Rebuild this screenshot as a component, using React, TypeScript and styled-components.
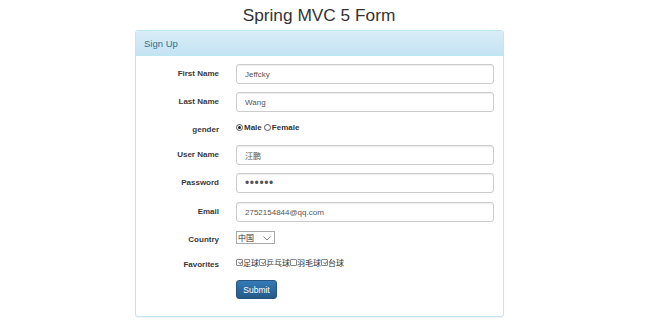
import { createGlobalStyle } from "styled-components";
import styled from "styled-components";

const GlobalStyle = createGlobalStyle`
  html, body {
    margin: 0;
    padding: 0;
    background: #ffffff;
  }
  body {
    font-family: "Liberation Sans", Arial, "Noto Sans CJK SC", sans-serif;
    color: #333333;
  }
`;

const Page = styled.div`
  width: 650px;
  height: 323px;
  overflow: hidden;
`;

const Title = styled.h2`
  margin: 0;
  padding-right: 12px;
  height: 30px;
  line-height: 30px;
  font-size: 17.3px;
  font-weight: 500;
  text-align: center;
  color: #333333;
`;

const Panel = styled.div`
  width: 367px;
  margin-left: 135px;
  border: 1px solid #bce8f1;
  border-radius: 3px;
  background: #ffffff;
  box-shadow: 0 1px 1px rgba(0, 0, 0, 0.05);
`;

const PanelHeading = styled.div`
  height: 24px;
  padding-left: 8px;
  display: flex;
  align-items: center;
  font-size: 9.5px;
  color: #31708f;
  background: linear-gradient(to bottom, #d9edf7 0%, #c4e3f3 100%);
  border-bottom: 1px solid #bce8f1;
  border-radius: 2px 2px 0 0;
`;

const PanelBody = styled.div`
  padding: 8px 0 17px 0;
`;

const Row = styled.div<{ $top?: number; $height: number }>`
  display: grid;
  grid-template-columns: 83px 258px;
  column-gap: 17px;
  margin-top: ${(p) => p.$top ?? 0}px;
  height: ${(p) => p.$height}px;
`;

const Label = styled.label<{ $pad?: number }>`
  font-size: 8px;
  font-weight: bold;
  color: #3a3a3a;
  text-align: right;
  padding-top: ${(p) => p.$pad ?? 0}px;
  line-height: ${(p) => (p.$pad === undefined ? "20px" : "10px")};
`;

const TextInput = styled.input<{ $dots?: boolean }>`
  display: block;
  box-sizing: border-box;
  width: 258px;
  height: 20px;
  padding: 0 8px;
  border: 1px solid #cccccc;
  border-radius: 3px;
  box-shadow: inset 0 1px 1px rgba(0, 0, 0, 0.075);
  font-family: "Liberation Sans", Arial, "Noto Sans CJK SC", sans-serif;
  font-size: ${(p) => (p.$dots ? "12px" : "8px")};
  letter-spacing: ${(p) => (p.$dots ? "0.6px" : "normal")};
  color: #555555;
  outline: none;
  background: #ffffff;
`;

const Inline = styled.div`
  display: flex;
  align-items: center;
  height: 12px;
  font-size: 8px;
  color: #333333;
`;

const RadioText = styled.span`
  font-weight: bold;
  margin-right: 2px;
`;

const Radio = styled.input`
  appearance: none;
  box-sizing: border-box;
  width: 7px;
  height: 7px;
  margin: 0 1px 0 0;
  border: 1px solid #555555;
  border-radius: 50%;
  background: #ffffff;
  position: relative;

  &:checked::after {
    content: "";
    position: absolute;
    left: 1px;
    top: 1px;
    width: 3px;
    height: 3px;
    border-radius: 50%;
    background: #222222;
  }
`;

const Check = styled.input`
  appearance: none;
  box-sizing: border-box;
  width: 7px;
  height: 7px;
  margin: 0;
  border: 1px solid #888888;
  border-radius: 1px;
  background: #ffffff;
  position: relative;

  &:checked::after {
    content: "";
    position: absolute;
    left: 1.5px;
    top: 0px;
    width: 2px;
    height: 3px;
    border: solid #888888;
    border-width: 0 1px 1px 0;
    transform: rotate(40deg);
  }
`;

const CheckText = styled.span`
  font-family: "Noto Sans CJK SC", sans-serif;
  font-size: 8px;
  color: #333333;
`;

const SelectWrap = styled.div`
  position: relative;
  width: 39px;
  height: 13px;
`;

const Select = styled.select`
  display: block;
  appearance: none;
  box-sizing: border-box;
  width: 39px;
  height: 13px;
  padding: 0 0 0 1px;
  border: 1px solid #a9a9a9;
  border-radius: 0;
  background: #ffffff;
  font-family: "Noto Sans CJK SC", sans-serif;
  font-size: 8px;
  line-height: 11px;
  color: #333333;
  outline: none;
`;

const Chevron = styled.svg`
  position: absolute;
  right: 4px;
  top: 4.5px;
  pointer-events: none;
`;

const SubmitButton = styled.button`
  display: block;
  width: 41px;
  height: 19px;
  padding: 0;
  border: 1px solid #245580;
  border-radius: 3px;
  background: linear-gradient(to bottom, #337ab7 0%, #265a88 100%);
  color: #ffffff;
  font-family: "Liberation Sans", Arial, sans-serif;
  font-size: 8.5px;
`;

const favorites = [
  { name: "足球", checked: true },
  { name: "乒乓球", checked: true },
  { name: "羽毛球", checked: false },
  { name: "台球", checked: true },
];

export default function App() {
  return (
    <Page>
      <GlobalStyle />
      <Title>Spring MVC 5 Form</Title>
      <Panel>
        <PanelHeading>Sign Up</PanelHeading>
        <PanelBody>
          <Row $height={20}>
            <Label>First Name</Label>
            <TextInput defaultValue="Jeffcky" />
          </Row>
          <Row $top={8} $height={20}>
            <Label>Last Name</Label>
            <TextInput defaultValue="Wang" />
          </Row>
          <Row $top={9} $height={16}>
            <Label $pad={4}>gender</Label>
            <Inline>
              <Radio type="radio" name="gender" defaultChecked />
              <RadioText>Male</RadioText>
              <Radio type="radio" name="gender" />
              <RadioText>Female</RadioText>
            </Inline>
          </Row>
          <Row $top={8} $height={20}>
            <Label>User Name</Label>
            <TextInput defaultValue="汪鹏" />
          </Row>
          <Row $top={8} $height={20}>
            <Label>Password</Label>
            <TextInput type="password" $dots defaultValue="123456" />
          </Row>
          <Row $top={9} $height={20}>
            <Label>Email</Label>
            <TextInput defaultValue="2752154844@qq.com" />
          </Row>
          <Row $top={9} $height={16}>
            <Label $pad={4}>Country</Label>
            <SelectWrap>
              <Select defaultValue="cn">
                <option value="cn">中国</option>
              </Select>
              <Chevron width="8" height="5" viewBox="0 0 8 5">
                <path d="M0.5 0.5 L4 4 L7.5 0.5" fill="none" stroke="#666" strokeWidth="0.8" />
              </Chevron>
            </SelectWrap>
          </Row>
          <Row $top={9} $height={14}>
            <Label $pad={4}>Favorites</Label>
            <Inline>
              {favorites.map((f) => (
                <span key={f.name} style={{ display: "contents" }}>
                  <Check type="checkbox" defaultChecked={f.checked} />
                  <CheckText>{f.name}</CheckText>
                </span>
              ))}
            </Inline>
          </Row>
          <Row $top={10} $height={19}>
            <span />
            <SubmitButton type="submit">Submit</SubmitButton>
          </Row>
        </PanelBody>
      </Panel>
    </Page>
  );
}
